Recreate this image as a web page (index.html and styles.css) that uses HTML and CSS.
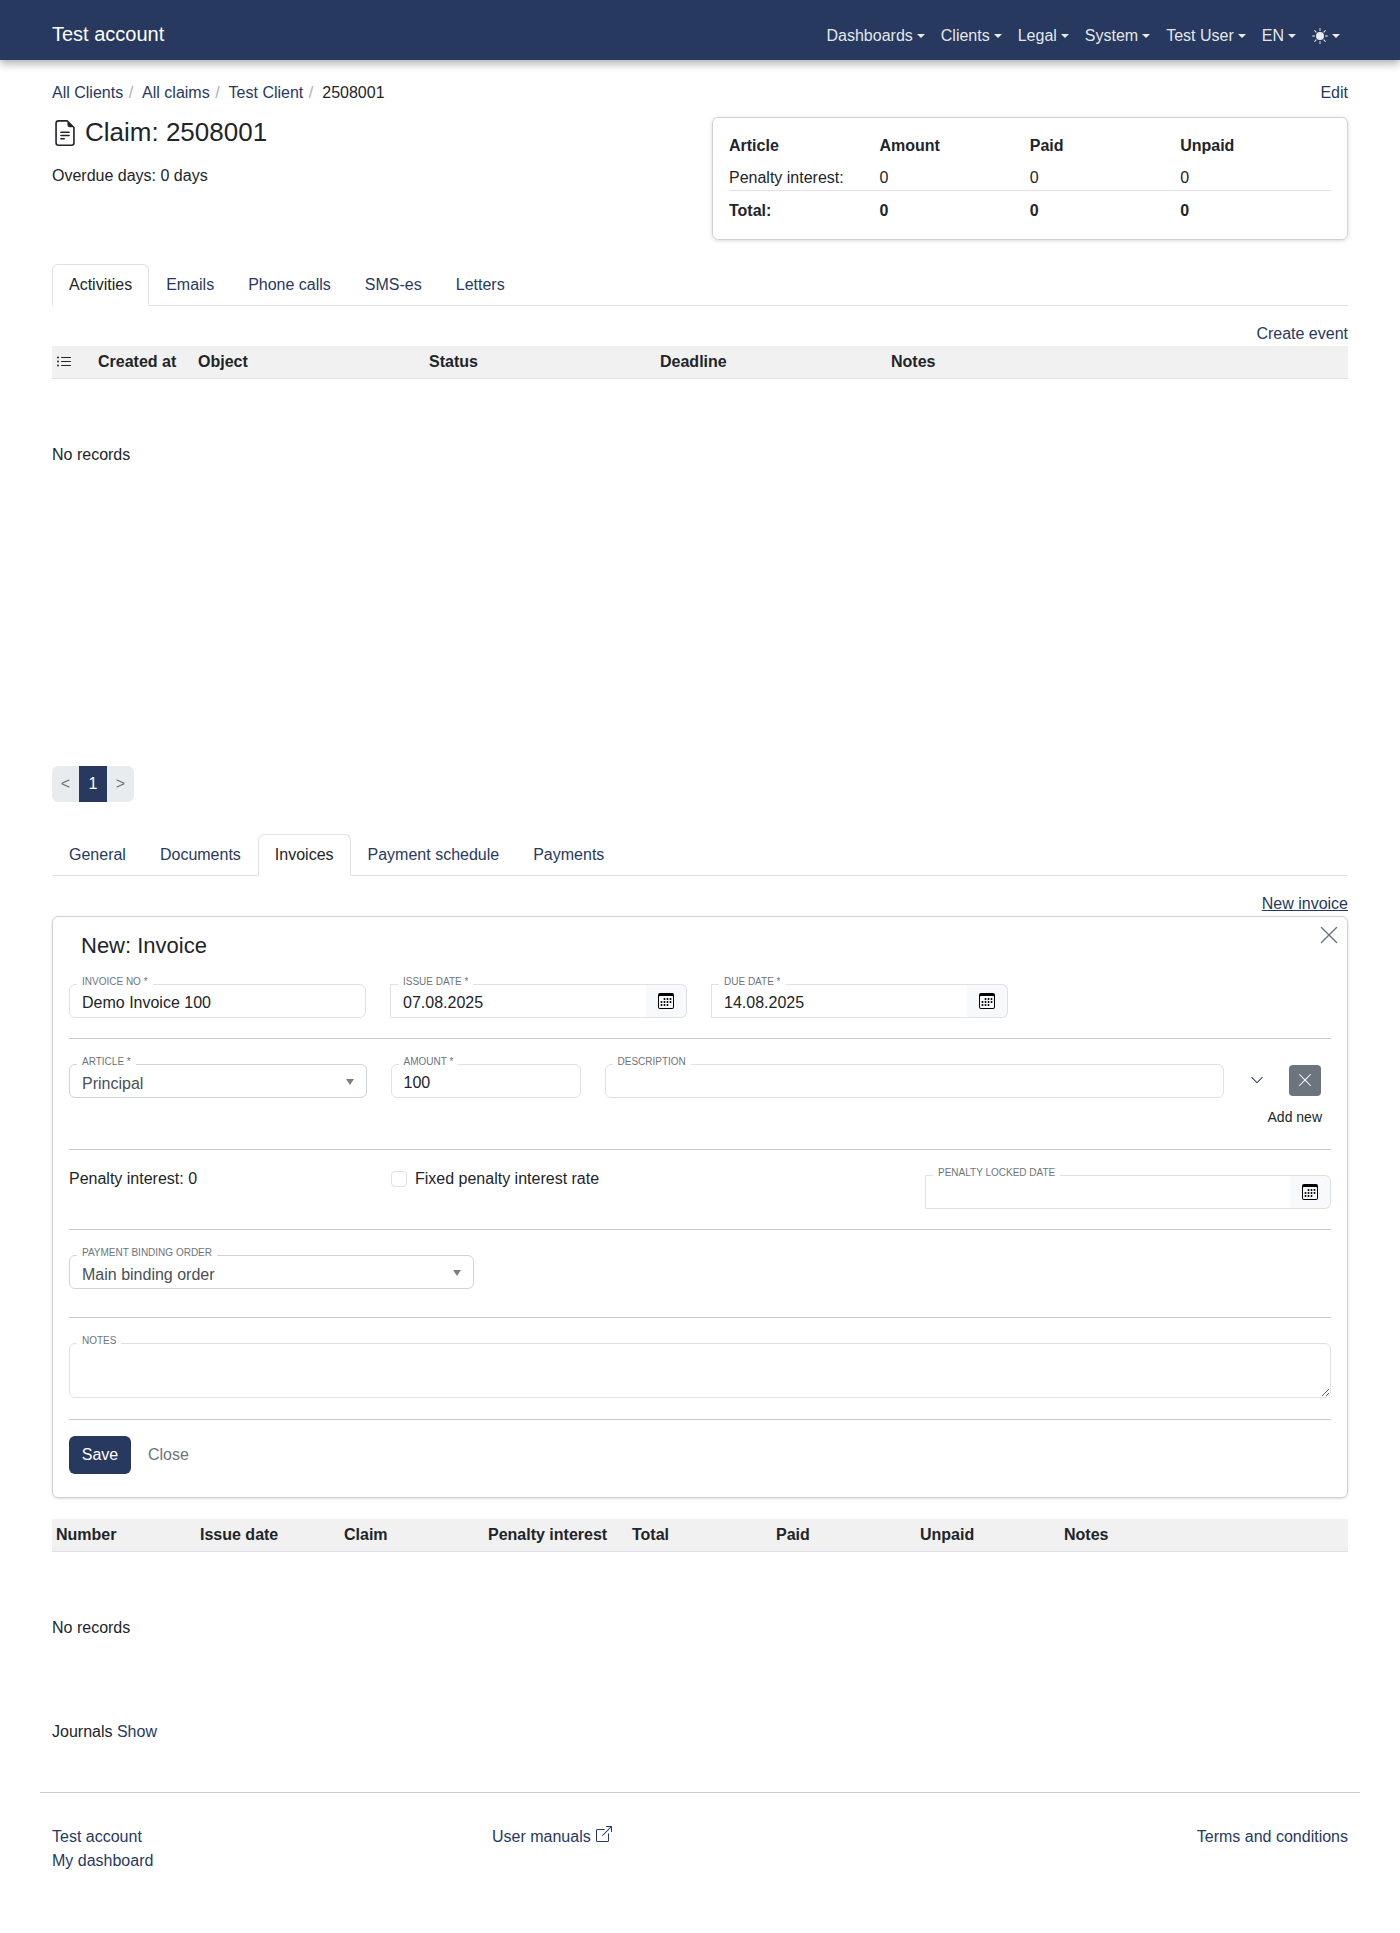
FILE: index.html
```html
<!DOCTYPE html>
<html lang="en">
<head>
<meta charset="utf-8">
<title>Claim: 2508001</title>
<link rel="stylesheet" href="styles.css">
</head>
<body>
<nav class="navbar">
  <a class="brand" href="#">Test account</a>
  <ul class="nav-menu">
    <li class="nav-item caret">Dashboards</li>
    <li class="nav-item caret">Clients</li>
    <li class="nav-item caret">Legal</li>
    <li class="nav-item caret">System</li>
    <li class="nav-item caret">Test User</li>
    <li class="nav-item caret">EN</li>
    <li class="nav-item caret"><svg class="sun" viewBox="0 0 16 16" fill="currentColor"><path d="M8 12a4 4 0 1 0 0-8 4 4 0 0 0 0 8zM8 0a.5.5 0 0 1 .5.5v2a.5.5 0 0 1-1 0v-2A.5.5 0 0 1 8 0zm0 13a.5.5 0 0 1 .5.5v2a.5.5 0 0 1-1 0v-2A.5.5 0 0 1 8 13zm8-5a.5.5 0 0 1-.5.5h-2a.5.5 0 0 1 0-1h2a.5.5 0 0 1 .5.5zM3 8a.5.5 0 0 1-.5.5h-2a.5.5 0 0 1 0-1h2A.5.5 0 0 1 3 8zm10.657-5.657a.5.5 0 0 1 0 .707l-1.414 1.415a.5.5 0 1 1-.707-.708l1.414-1.414a.5.5 0 0 1 .707 0zm-9.193 9.193a.5.5 0 0 1 0 .707L3.05 13.657a.5.5 0 0 1-.707-.707l1.414-1.414a.5.5 0 0 1 .707 0zm9.193 2.121a.5.5 0 0 1-.707 0l-1.414-1.414a.5.5 0 0 1 .707-.707l1.414 1.414a.5.5 0 0 1 0 .707zM4.464 4.465a.5.5 0 0 1-.707 0L2.343 3.05a.5.5 0 1 1 .707-.707l1.414 1.414a.5.5 0 0 1 0 .708z"/></svg></li>
  </ul>
</nav>

<main class="page">
  <div class="crumb-row">
    <ol class="breadcrumb">
      <li><a href="#">All Clients</a><span class="sep">/</span></li>
      <li><a href="#">All claims</a><span class="sep">/</span></li>
      <li><a href="#">Test Client</a><span class="sep">/</span></li>
      <li>2508001</li>
    </ol>
    <a href="#">Edit</a>
  </div>

  <div class="head-row">
    <div class="head-left">
      <h1 class="title"><svg class="title-icon" viewBox="0 0 16 16" fill="currentColor"><path d="M5.5 7a.5.5 0 0 0 0 1h5a.5.5 0 0 0 0-1h-5zM5 9.5a.5.5 0 0 1 .5-.5h5a.5.5 0 0 1 0 1h-5a.5.5 0 0 1-.5-.5zm0 2a.5.5 0 0 1 .5-.5h2a.5.5 0 0 1 0 1h-2a.5.5 0 0 1-.5-.5z"/><path d="M9.5 0H4a2 2 0 0 0-2 2v12a2 2 0 0 0 2 2h8a2 2 0 0 0 2-2V4.5L9.5 0zm0 1v2A1.5 1.5 0 0 0 11 4.5h2V14a1 1 0 0 1-1 1H4a1 1 0 0 1-1-1V2a1 1 0 0 1 1-1h5.5z"/></svg>Claim: 2508001</h1>
      <p class="overdue">Overdue days: 0 days</p>
    </div>
    <div class="summary">
      <div class="sum-row sum-head"><span>Article</span><span>Amount</span><span>Paid</span><span>Unpaid</span></div>
      <div class="sum-row sum-body"><span>Penalty interest:</span><span>0</span><span>0</span><span>0</span></div>
      <div class="sum-row sum-total"><span>Total:</span><span>0</span><span>0</span><span>0</span></div>
    </div>
  </div>

  <ul class="tabs tabs-top">
    <li class="tab active">Activities</li>
    <li class="tab">Emails</li>
    <li class="tab">Phone calls</li>
    <li class="tab">SMS-es</li>
    <li class="tab">Letters</li>
  </ul>

  <div class="action-row action-first"><a href="#">Create event</a></div>
  <div class="thead thead-activities">
    <span class="th-icon"><svg class="icon16" viewBox="0 0 16 16" fill="currentColor"><path d="M5 11.5a.5.5 0 0 1 .5-.5h9a.5.5 0 0 1 0 1h-9a.5.5 0 0 1-.5-.5zm0-4a.5.5 0 0 1 .5-.5h9a.5.5 0 0 1 0 1h-9a.5.5 0 0 1-.5-.5zm0-4a.5.5 0 0 1 .5-.5h9a.5.5 0 0 1 0 1h-9a.5.5 0 0 1-.5-.5zm-3 1a1 1 0 1 0 0-2 1 1 0 0 0 0 2zm0 4a1 1 0 1 0 0-2 1 1 0 0 0 0 2zm0 4a1 1 0 1 0 0-2 1 1 0 0 0 0 2z"/></svg></span>
    <span>Created at</span><span>Object</span><span>Status</span><span>Deadline</span><span>Notes</span>
  </div>
  <div class="empty empty-activities">No records</div>

  <div class="pagination">
    <span class="page-link">&lt;</span>
    <span class="page-link current">1</span>
    <span class="page-link">&gt;</span>
  </div>

  <ul class="tabs tabs-bottom">
    <li class="tab">General</li>
    <li class="tab">Documents</li>
    <li class="tab active">Invoices</li>
    <li class="tab">Payment schedule</li>
    <li class="tab">Payments</li>
  </ul>

  <div class="action-row action-second"><a class="underlined" href="#">New invoice</a></div>

  <section class="form-card">
    <button class="close-x" type="button" aria-label="Close"><svg viewBox="0 0 16 16" fill="currentColor"><path d="M2.146 2.854a.5.5 0 1 1 .708-.708L8 7.293l5.146-5.147a.5.5 0 0 1 .708.708L8.707 8l5.147 5.146a.5.5 0 0 1-.708.708L8 8.707l-5.146 5.147a.5.5 0 0 1-.708-.708L7.293 8 2.146 2.854Z"/></svg></button>
    <h2 class="form-title">New: Invoice</h2>

    <div class="form-sec sec-first">
      <div class="grid-4">
        <div class="field"><label>Invoice No *</label><input value="Demo Invoice 100"></div>
        <div class="field date"><label>Issue date *</label><input value="07.08.2025"><span class="addon"><svg class="icon16" viewBox="0 0 16 16" fill="currentColor"><path d="M14 0H2a2 2 0 0 0-2 2v12a2 2 0 0 0 2 2h12a2 2 0 0 0 2-2V2a2 2 0 0 0-2-2zM1 3.857C1 3.384 1.448 3 2 3h12c.552 0 1 .384 1 .857v10.286c0 .473-.448.857-1 .857H2c-.552 0-1-.384-1-.857V3.857z"/><path d="M6.5 7a1 1 0 1 0 0-2 1 1 0 0 0 0 2zm3 0a1 1 0 1 0 0-2 1 1 0 0 0 0 2zm3 0a1 1 0 1 0 0-2 1 1 0 0 0 0 2zm-9 3a1 1 0 1 0 0-2 1 1 0 0 0 0 2zm3 0a1 1 0 1 0 0-2 1 1 0 0 0 0 2zm3 0a1 1 0 1 0 0-2 1 1 0 0 0 0 2zm3 0a1 1 0 1 0 0-2 1 1 0 0 0 0 2zm-9 3a1 1 0 1 0 0-2 1 1 0 0 0 0 2zm3 0a1 1 0 1 0 0-2 1 1 0 0 0 0 2zm3 0a1 1 0 1 0 0-2 1 1 0 0 0 0 2z"/></svg></span></div>
        <div class="field date"><label>Due date *</label><input value="14.08.2025"><span class="addon"><svg class="icon16" viewBox="0 0 16 16" fill="currentColor"><path d="M14 0H2a2 2 0 0 0-2 2v12a2 2 0 0 0 2 2h12a2 2 0 0 0 2-2V2a2 2 0 0 0-2-2zM1 3.857C1 3.384 1.448 3 2 3h12c.552 0 1 .384 1 .857v10.286c0 .473-.448.857-1 .857H2c-.552 0-1-.384-1-.857V3.857z"/><path d="M6.5 7a1 1 0 1 0 0-2 1 1 0 0 0 0 2zm3 0a1 1 0 1 0 0-2 1 1 0 0 0 0 2zm3 0a1 1 0 1 0 0-2 1 1 0 0 0 0 2zm-9 3a1 1 0 1 0 0-2 1 1 0 0 0 0 2zm3 0a1 1 0 1 0 0-2 1 1 0 0 0 0 2zm3 0a1 1 0 1 0 0-2 1 1 0 0 0 0 2zm3 0a1 1 0 1 0 0-2 1 1 0 0 0 0 2zm-9 3a1 1 0 1 0 0-2 1 1 0 0 0 0 2zm3 0a1 1 0 1 0 0-2 1 1 0 0 0 0 2zm3 0a1 1 0 1 0 0-2 1 1 0 0 0 0 2z"/></svg></span></div>
      </div>
    </div>

    <div class="form-sec sec-lines">
      <div class="line-grid">
        <div class="field select"><label>Article *</label><div class="select-box">Principal</div></div>
        <div class="field"><label>Amount *</label><input value="100"></div>
        <div class="field"><label>Description</label><input value=""></div>
        <div class="line-actions">
          <div class="line-buttons">
            <svg class="chevron" viewBox="0 0 16 16" fill="currentColor"><path d="M1.646 4.646a.5.5 0 0 1 .708 0L8 10.293l5.646-5.647a.5.5 0 0 1 .708.708l-6 6a.5.5 0 0 1-.708 0l-6-6a.5.5 0 0 1 0-.708z"/></svg>
            <span class="remove-btn"><svg viewBox="0 0 16 16" fill="currentColor"><path d="M2.146 2.854a.5.5 0 1 1 .708-.708L8 7.293l5.146-5.147a.5.5 0 0 1 .708.708L8.707 8l5.147 5.146a.5.5 0 0 1-.708.708L8 8.707l-5.146 5.147a.5.5 0 0 1-.708-.708L7.293 8 2.146 2.854Z"/></svg></span>
          </div>
          <a class="add-new" href="#">Add new</a>
        </div>
      </div>
    </div>

    <div class="form-sec sec-penalty">
      <div class="penalty-row">
        <span class="penalty-text">Penalty interest: 0</span>
        <span class="check-wrap"><span class="checkbox"></span>Fixed penalty interest rate</span>
        <div class="field date penalty-date"><label>Penalty locked date</label><input value=""><span class="addon"><svg class="icon16" viewBox="0 0 16 16" fill="currentColor"><path d="M14 0H2a2 2 0 0 0-2 2v12a2 2 0 0 0 2 2h12a2 2 0 0 0 2-2V2a2 2 0 0 0-2-2zM1 3.857C1 3.384 1.448 3 2 3h12c.552 0 1 .384 1 .857v10.286c0 .473-.448.857-1 .857H2c-.552 0-1-.384-1-.857V3.857z"/><path d="M6.5 7a1 1 0 1 0 0-2 1 1 0 0 0 0 2zm3 0a1 1 0 1 0 0-2 1 1 0 0 0 0 2zm3 0a1 1 0 1 0 0-2 1 1 0 0 0 0 2zm-9 3a1 1 0 1 0 0-2 1 1 0 0 0 0 2zm3 0a1 1 0 1 0 0-2 1 1 0 0 0 0 2zm3 0a1 1 0 1 0 0-2 1 1 0 0 0 0 2zm3 0a1 1 0 1 0 0-2 1 1 0 0 0 0 2zm-9 3a1 1 0 1 0 0-2 1 1 0 0 0 0 2zm3 0a1 1 0 1 0 0-2 1 1 0 0 0 0 2zm3 0a1 1 0 1 0 0-2 1 1 0 0 0 0 2z"/></svg></span></div>
      </div>
    </div>

    <div class="form-sec sec-binding">
      <div class="field select binding"><label>Payment binding order</label><div class="select-box">Main binding order</div></div>
    </div>

    <div class="form-sec sec-notes">
      <div class="field notes"><label>Notes</label><textarea></textarea></div>
    </div>

    <div class="form-sec sec-buttons">
      <button class="btn-save" type="button">Save</button>
      <a class="btn-close" href="#">Close</a>
    </div>
  </section>

  <div class="thead thead-invoices">
    <span>Number</span><span>Issue date</span><span>Claim</span><span>Penalty interest</span><span>Total</span><span>Paid</span><span>Unpaid</span><span>Notes</span>
  </div>
  <div class="empty empty-invoices">No records</div>

  <p class="journals">Journals <a href="#">Show</a></p>
</main>

<footer class="footer">
  <div class="footer-cols">
    <div class="foot-col foot-left"><a href="#">Test account</a><a href="#">My dashboard</a></div>
    <div class="foot-col foot-mid"><a href="#">User manuals <svg class="icon16 ext" viewBox="0 0 16 16" fill="currentColor"><path d="M8.636 3.5a.5.5 0 0 0-.5-.5H1.5A1.5 1.5 0 0 0 0 4.5v10A1.5 1.5 0 0 0 1.5 16h10a1.5 1.5 0 0 0 1.5-1.5V7.864a.5.5 0 0 0-1 0V14.5a.5.5 0 0 1-.5.5h-10a.5.5 0 0 1-.5-.5v-10a.5.5 0 0 1 .5-.5h6.636a.5.5 0 0 0 .5-.5z"/><path d="M16 .5a.5.5 0 0 0-.5-.5h-5a.5.5 0 0 0 0 1h3.793L6.146 9.146a.5.5 0 1 0 .708.708L15 1.707V5.5a.5.5 0 0 0 1 0v-5z"/></svg></a></div>
    <div class="foot-col foot-right"><a href="#">Terms and conditions</a></div>
  </div>
</footer>
</body>
</html>
```
FILE: styles.css
```css
* { box-sizing: border-box; }
html, body { margin: 0; padding: 0; }
body {
  font-family: "Liberation Sans", Arial, sans-serif;
  font-size: 16px;
  line-height: 24px;
  color: #212529;
  background: #fff;
  min-height: 1933px;
}
a { color: #27395f; text-decoration: none; }
ul, ol { list-style: none; margin: 0; padding: 0; }
.icon16 { width: 16px; height: 16px; display: block; }

/* navbar */
.navbar {
  height: 60px;
  background: #27395f;
  box-shadow: 0 4px 8px rgba(0, 0, 0, .3);
  display: flex;
  align-items: center;
  justify-content: space-between;
  padding: 0 52px;
}
.brand { color: #fff; font-size: 20px; line-height: 30px; margin-top: 8px; }
.nav-menu { display: flex; align-items: center; margin-top: 12px; }
.nav-item { color: rgba(255, 255, 255, .9); padding: 0 8px; display: flex; align-items: center; }
.caret::after {
  content: "";
  display: inline-block;
  margin-left: 4px;
  border-top: 4.8px solid currentColor;
  border-left: 4.8px solid transparent;
  border-right: 4.8px solid transparent;
}
.sun { width: 16px; height: 16px; }

/* page */
.page { padding: 0 52px; }
.crumb-row {
  display: flex;
  justify-content: space-between;
  padding-top: 21px;
}
.breadcrumb { display: flex; }
.sep { color: #a9afb6; padding: 0 9px 0 5.5px; }

.head-row { display: flex; justify-content: space-between; margin-top: 12px; }
.title { margin: 0; font-size: 26px; font-weight: 400; line-height: 31px; display: flex; align-items: center; }
.title-icon { width: 26px; height: 26px; margin-right: 7px; }
.overdue { margin: 16px 0 0; }
.summary {
  width: 636px;
  height: 123px;
  border: 1px solid #d0d3d6;
  border-radius: 6px;
  box-shadow: 0 1px 4px rgba(0, 0, 0, .15);
  padding: 16px 16px 15px;
}
.sum-row { display: grid; grid-template-columns: repeat(4, 150.4px); line-height: 24px; }
.sum-head { font-weight: 700; height: 27px; }
.sum-body { height: 30px; padding-top: 6px; line-height: 21px; border-bottom: 1px solid #dee2e6; width: 602px; }
.sum-total { font-weight: 700; padding-top: 8px; }

/* tabs */
.tabs { display: flex; border-bottom: 1px solid #dee2e6; height: 42px; }
.tabs-top { margin-top: 24px; }
.tabs-bottom { margin-top: 32px; }
.tab { padding: 8px 16px; color: #27395f; height: 42px; line-height: 24px; border: 1px solid transparent; border-radius: 6px 6px 0 0; }
.tab.active { color: #212529; background: #fff; border-color: #dee2e6 #dee2e6 #fff; }

.action-row { display: flex; justify-content: flex-end; }
.action-first { margin-top: 16px; }
.action-second { margin-top: 16px; }
.underlined { text-decoration: underline; }

/* tables */
.thead {
  display: grid;
  height: 33px;
  background: #f1f1f1;
  border-bottom: 1px solid #dee2e6;
  font-weight: 700;
  align-items: center;
}
.thead-activities { grid-template-columns: 42px 100px 231px 231px 231px 1fr; padding-left: 4px; }
.th-icon { display: flex; }
.thead-invoices { grid-template-columns: repeat(7, 144px) 1fr; padding-left: 4px; margin-top: 21px; }
.empty-activities { margin-top: 64px; height: 323px; }
.empty-invoices { margin-top: 64px; height: 24px; }

.pagination { display: inline-flex; margin: 0; border-radius: 6px; overflow: hidden; height: 36px; vertical-align: top; }
.page-link { background: #e9ecef; color: #6c757d; width: 27px; text-align: center; line-height: 36px; }
.page-link.current { background: #27395f; color: #fff; width: 28px; }

/* form card */
.form-card {
  position: relative;
  border: 1px solid #cfd2d5;
  border-radius: 6px;
  box-shadow: 0 1px 3px rgba(0, 0, 0, .12);
  padding: 0 16px 23px;
}
.close-x {
  position: absolute;
  top: 7px;
  right: 7px;
  width: 22px;
  height: 22px;
  padding: 0;
  border: 0;
  background: none;
  color: #6c757d;
}
.close-x svg { width: 22px; height: 22px; display: block; }
.form-title { margin: 15px 0 0 12px; padding: 0; font-size: 22px; font-weight: 400; line-height: 28px; }
.form-sec { border-bottom: 1px solid #c8cacc; padding-top: 25px; }
.sec-first { padding-top: 24px; padding-bottom: 20px; }
.sec-lines { height: 111px; }
.sec-penalty { padding-bottom: 20px; }
.sec-binding { padding-bottom: 28px; }
.sec-notes { padding-bottom: 21px; }
.sec-buttons { border-bottom: 0; padding-top: 16px; display: flex; align-items: center; }

.grid-4 { display: grid; grid-template-columns: repeat(4, 297px); column-gap: 24px; }
.line-grid { display: grid; grid-template-columns: 297.5px 190px 619.5px 1fr; column-gap: 24px; }

.field { position: relative; display: flex; height: 34px; }
.field label {
  position: absolute;
  left: 8px;
  top: -10px;
  padding: 0 5px;
  background: #fff;
  font-size: 10px;
  line-height: 16px;
  text-transform: uppercase;
  color: #6c757d;
  z-index: 1;
}
.field input, .select-box, .field textarea {
  width: 100%;
  height: 100%;
  border: 1px solid #dee2e6;
  border-radius: 6px;
  padding: 3px 12px 0;
  font: inherit;
  color: #212529;
  background: #fff;
  outline: none;
  min-width: 0;
}
.select-box { color: #495057; padding-top: 7px; line-height: 24px; border-color: #ced4da; }
.select::after {
  content: "";
  position: absolute;
  right: 13px;
  top: 15px;
  border-top: 6px solid #808080;
  border-left: 4px solid transparent;
  border-right: 4px solid transparent;
}
.date input { border-radius: 0; border-right: 0; flex: 1; }
.addon {
  width: 41px;
  flex: none;
  background: #f8f9fa;
  border: 1px solid #dee2e6;
  border-left: 0;
  border-radius: 0 6px 6px 0;
  display: flex;
  align-items: center;
  justify-content: center;
  color: #000;
}
.line-actions { display: flex; flex-direction: column; align-items: flex-end; margin-right: 10px; }
.line-buttons { display: flex; align-items: center; gap: 25px; height: 32px; }
.chevron { width: 14px; height: 14px; color: #27395f; }
.remove-btn {
  width: 32px;
  height: 31px;
  background: #6c757d;
  border-radius: 4px;
  color: #fff;
  display: flex;
  align-items: center;
  justify-content: center;
}
.remove-btn svg { width: 16px; height: 16px; }
.add-new { font-size: 14px; line-height: 21px; margin: 11px -1px 0 0; color: #212529; }

.penalty-row { display: flex; align-items: flex-start; }
.penalty-text { width: 322px; margin-top: -8px; }
.check-wrap { display: flex; align-items: center; height: 24px; margin-top: -8px; }
.checkbox { width: 16px; height: 16px; border: 1px solid #dee2e6; border-radius: 4px; margin-right: 8px; }
.penalty-date { width: 406px; margin-left: auto; }
.binding { width: 405px; }
.notes { height: 55px; }
.notes textarea { resize: vertical; display: block; padding: 6px 12px; }

.btn-save {
  width: 62px;
  height: 38px;
  border: 0;
  border-radius: 6px;
  background: #27395f;
  color: #fff;
  font: inherit;
  padding: 0;
}
.btn-close { color: #6c757d; margin-left: 17px; }

.journals { margin: 0; padding-top: 80px; }

/* footer */
.footer { margin: 48px 40px 0; border-top: 1px solid #c8cacc; padding: 32px 12px 0; }
.footer-cols { display: grid; grid-template-columns: 440px 1fr auto; }
.foot-col { display: flex; flex-direction: column; }
.ext { display: inline-block; vertical-align: 0; margin-left: 1px; }
```
